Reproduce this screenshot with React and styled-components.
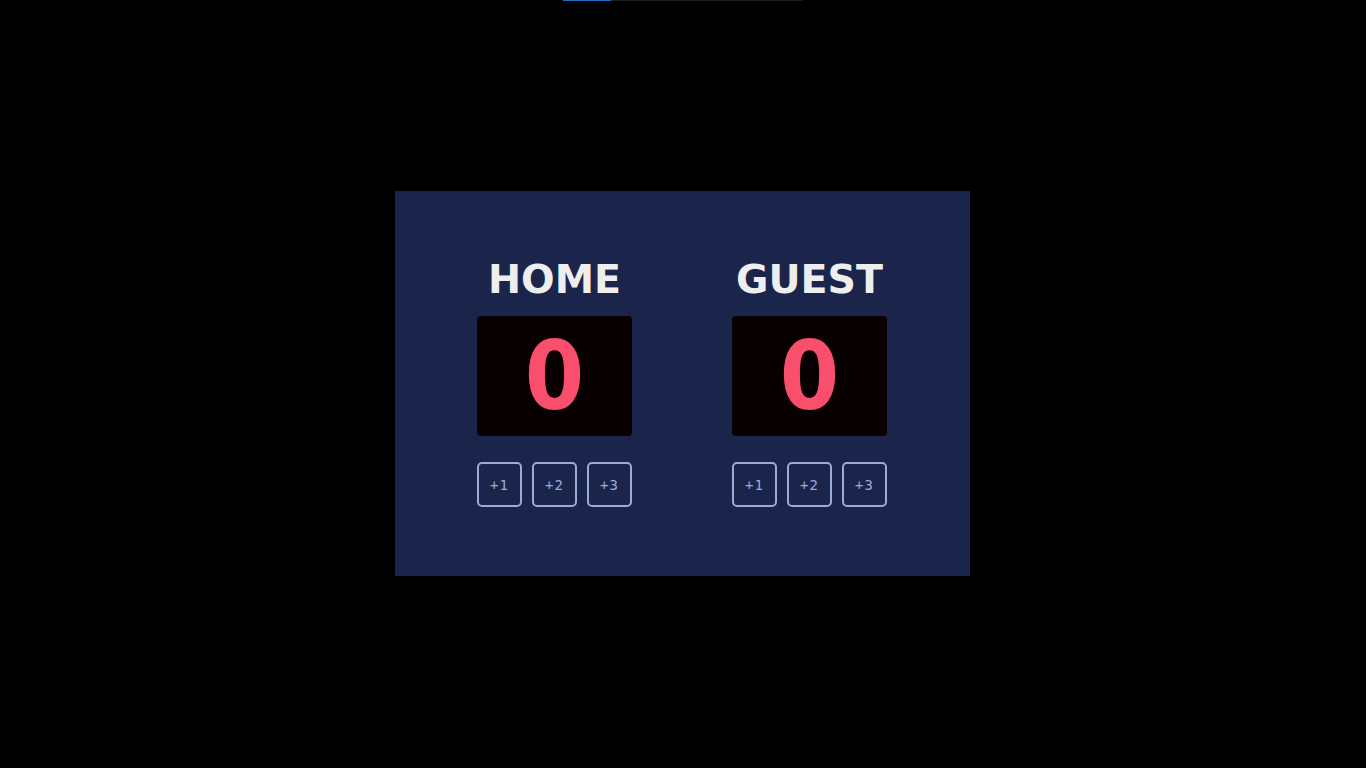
import styled, { createGlobalStyle } from 'styled-components';

const GlobalStyle = createGlobalStyle`
  html, body {
    margin: 0;
    padding: 0;
    background: #000000;
  }
  body {
    font-family: 'DejaVu Sans', Verdana, sans-serif;
  }
`;

const Page = styled.div`
  min-height: 768px;
  padding-right: 1px;
  display: flex;
  flex-direction: column;
  align-items: center;
`;

const Progress = styled.div`
  width: 240px;
  height: 1px;
  background-color: #1c1e24;
  display: flex;
`;

const ProgressFill = styled.div`
  width: 48px;
  background-color: #1f6fc4;
`;

const Board = styled.main`
  margin-top: 190px;
  width: 575px;
  height: 385px;
  box-sizing: border-box;
  padding: 68px 83px 0 82px;
  background-color: #1b244a;
  display: flex;
  justify-content: space-between;
`;

const Team = styled.section`
  width: 155px;
  display: flex;
  flex-direction: column;
  align-items: center;
`;

const Title = styled.h2`
  margin: 0;
  font-size: 39.5px;
  line-height: 40px;
  font-weight: bold;
  color: #eeeeee;
  white-space: nowrap;
`;

const Score = styled.div`
  margin-top: 17px;
  width: 155px;
  height: 120px;
  box-sizing: border-box;
  padding-top: 1px;
  border-radius: 4px;
  background-color: #080001;
  display: flex;
  align-items: center;
  justify-content: center;
  font-family: 'DejaVu Sans Condensed', 'DejaVu Sans', sans-serif;
  font-stretch: condensed;
  font-weight: bold;
  font-size: 95px;
  line-height: 1;
  color: #f94f6d;
`;

const Buttons = styled.div`
  margin-top: 26px;
  width: 100%;
  display: flex;
  justify-content: space-between;
`;

const Button = styled.button`
  width: 45px;
  height: 45px;
  box-sizing: border-box;
  padding: 0;
  border: 2px solid #9aabd8;
  border-radius: 5px;
  background: transparent;
  color: #9aabd8;
  font-family: 'DejaVu Sans Mono', 'Liberation Mono', monospace;
  font-size: 14px;
  letter-spacing: 1px;
  cursor: pointer;
`;

const teams = ['HOME', 'GUEST'];

export default function App() {
  return (
    <Page>
      <GlobalStyle />
      <Progress>
        <ProgressFill />
      </Progress>
      <Board>
        {teams.map((name) => (
          <Team key={name}>
            <Title>{name}</Title>
            <Score>0</Score>
            <Buttons>
              <Button>+1</Button>
              <Button>+2</Button>
              <Button>+3</Button>
            </Buttons>
          </Team>
        ))}
      </Board>
    </Page>
  );
}
